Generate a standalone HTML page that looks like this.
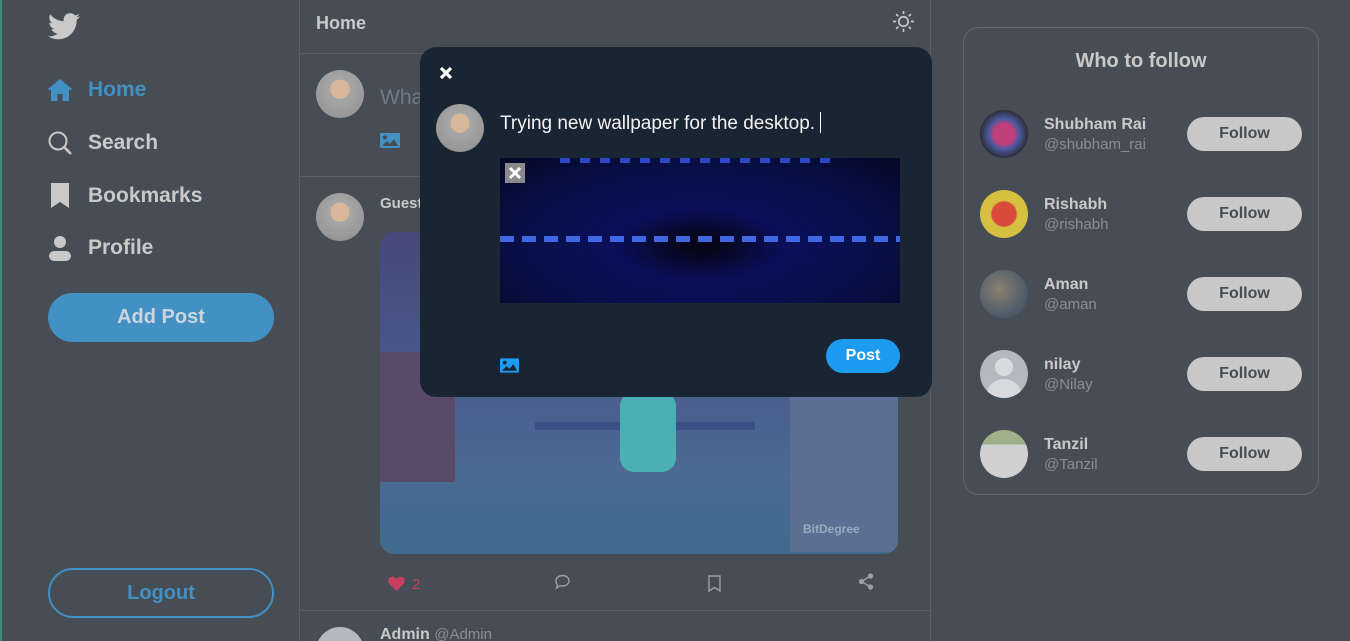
<!DOCTYPE html>
<html><head><meta charset="utf-8"><style>
*{box-sizing:border-box;margin:0;padding:0}
html{width:1350px;height:641px;overflow:hidden}
body{width:1350px;height:641px;overflow:hidden;background:#474d55;font-family:"Liberation Sans",sans-serif;color:#c9c9c9;position:relative}
.abs{position:absolute}
.nav{left:48px;font-size:21px;font-weight:bold;display:flex;align-items:center}
.nav svg{margin-right:16px}
.btn{border-radius:25px;font-weight:bold;font-size:20px;text-align:center}
.av{border-radius:50%;background:radial-gradient(circle at 50% 40%,#d9b79a 0 25%,#a7a7a7 26%,#8d8d8d 100%)}
.fb{position:absolute;left:1187px;width:115px;height:34px;border-radius:17px;background:#c8c8c8;color:#474d55;font-weight:bold;font-size:16px;text-align:center;line-height:33px}
.fn{position:absolute;left:1044px;font-weight:bold;font-size:16px;color:#c9c9c9}
.fh{position:absolute;left:1044px;font-size:15px;color:#8a8e94}
.fa{position:absolute;left:980px;width:48px;height:48px;border-radius:50%}
</style></head><body>
<div class="abs" style="left:0;top:0;width:2px;height:641px;background:#3e8a78"></div>
<svg class="abs" style="left:48px;top:13px" width="32" height="27" viewBox="0 0 24 20"><path fill="#c9c9c9" d="M24 2.4c-.9.4-1.8.7-2.8.8 1-.6 1.8-1.6 2.2-2.7-1 .6-2 1-3.1 1.2C19.3.7 18 0 16.6 0c-2.7 0-4.9 2.2-4.9 4.9 0 .4 0 .8.1 1.1C7.7 5.8 4.1 3.9 1.700.9c-.4.7-.7 1.6-.7 2.5 0 1.7.9 3.2 2.2 4.1-.8 0-1.600-.2-2.200-.6v.1c0 2.4 1.7 4.4 3.9 4.8-.4.1-.8.2-1.3.2-.3 0-.6 0-.9-.1.6 2 2.4 3.4 4.6 3.4-1.7 1.3-3.8 2.1-6.1 2.1H0c2.2 1.4 4.8 2.2 7.5 2.2 9.1 0 14-7.5 14-14v-.6c1-.7 1.8-1.6 2.5-2.5z"/></svg>
<div class="abs nav" style="top:78px;color:#4390c3"><svg width="24" height="22" viewBox="0 0 24 22"><path fill="#4390c3" d="M12 0 0 10l1.5 1.6L3 10.4V22h6.5v-7h5v7H21V10.4l1.5 1.2L24 10z"/></svg>Home</div>
<div class="abs nav" style="top:131px"><svg width="24" height="24" viewBox="0 0 24 24"><circle cx="10" cy="10" r="8.5" fill="none" stroke="#c9c9c9" stroke-width="2"/><path d="M16 16l7 7" stroke="#c9c9c9" stroke-width="2.5"/></svg>Search</div>
<div class="abs nav" style="top:183px"><svg width="24" height="26" viewBox="0 0 24 26"><path fill="#c9c9c9" d="M3 0h18v25l-9-6-9 6z"/></svg>Bookmarks</div>
<div class="abs nav" style="top:235px"><svg width="24" height="26" viewBox="0 0 24 26"><circle cx="12" cy="7" r="6" fill="#c9c9c9"/><rect x="1" y="16" width="22" height="10" rx="5" fill="#c9c9c9"/></svg>Profile</div>
<div class="abs btn" style="left:48px;top:293px;width:226px;height:49px;line-height:49px;background:#4390c3;color:#c9d6df">Add Post</div>
<div class="abs btn" style="left:48px;top:568px;width:226px;height:50px;line-height:46px;border:2px solid #4390c3;color:#4390c3">Logout</div>

<div class="abs" style="left:299px;top:0;width:1px;height:641px;background:#5a6068"></div>
<div class="abs" style="left:930px;top:0;width:1px;height:641px;background:#5a6068"></div>
<div class="abs" style="left:316px;top:13px;font-weight:bold;font-size:18px">Home</div>
<svg class="abs" style="left:893px;top:11px" width="21" height="21" viewBox="0 0 20 20"><circle cx="10" cy="10" r="4.5" fill="none" stroke="#c9c9c9" stroke-width="1.6"/><g stroke="#c9c9c9" stroke-width="1.6"><path d="M10 0v3M10 17v3M0 10h3M17 10h3M3 3l2 2M15 15l2 2M3 17l2-2M15 5l2-2"/></g></svg>
<div class="abs" style="left:300px;top:53px;width:630px;height:1px;background:#5a6068"></div>
<div class="abs av" style="left:316px;top:70px;width:48px;height:48px"></div>
<div class="abs" style="left:380px;top:86px;font-size:21px;color:#6f7a88">What</div>
<svg class="abs" style="left:380px;top:133px" width="20" height="15" viewBox="0 0 20 15"><rect width="20" height="15" rx="1.5" fill="#4390c3"/><circle cx="5" cy="4.5" r="2" fill="#474d55"/><path d="M2 13l5-5 3 3 4-5 4 7z" fill="#474d55"/></svg>
<div class="abs" style="left:300px;top:176px;width:630px;height:1px;background:#5a6068"></div>
<div class="abs av" style="left:316px;top:193px;width:48px;height:48px"></div>
<div class="abs" style="left:380px;top:195px;font-weight:bold;font-size:15px">Guest</div>
<div class="abs" style="left:380px;top:232px;width:518px;height:322px;border-radius:14px;overflow:hidden;background:linear-gradient(180deg,#45487a 0%,#4a5a8e 45%,#4a6a93 75%,#3f6b8c 100%)">
 <div class="abs" style="left:0;top:120px;width:75px;height:130px;background:#5a4a6a"></div>
 <div class="abs" style="left:410px;top:150px;width:108px;height:170px;background:#5a6f92"></div>
 <div class="abs" style="left:155px;top:190px;width:220px;height:8px;background:#3b4f86"></div>
 <div class="abs" style="left:240px;top:160px;width:56px;height:80px;border-radius:14px;background:#4bb0b6"></div>
 <div class="abs" style="left:423px;top:290px;font-size:12px;color:#9aaac0;font-weight:bold">BitDegree</div>
</div>
<svg class="abs" style="left:388px;top:576px" width="17" height="15" viewBox="0 0 24 21"><path fill="#c8405f" d="M12 21 2 11C-1 8 0 2 5 1c3-.5 5 1 7 3 2-2 4-3.5 7-3 5 1 6 7 3 10z"/></svg>
<div class="abs" style="left:412px;top:576px;font-size:15px;color:#c8405f">2</div>
<svg class="abs" style="left:554px;top:574px" width="17" height="16" viewBox="0 0 17 16"><path d="M8.5 1.5c3.6 0 6.5 2.4 6.5 5.3s-2.9 5.2-6.5 5.2c-.8 0-1.6-.1-2.3-.3L2.5 14l1-3C2.5 10 2 8.5 2 6.8 2 3.9 4.9 1.5 8.5 1.5z" fill="none" stroke="#9aa0a6" stroke-width="1.4"/></svg>
<svg class="abs" style="left:708px;top:575px" width="13" height="17" viewBox="0 0 13 17"><path d="M1 1h11v15l-5.5-3.5L1 16z" fill="none" stroke="#9aa0a6" stroke-width="1.4"/></svg>
<svg class="abs" style="left:858px;top:573px" width="16" height="17" viewBox="0 0 16 17"><circle cx="12.5" cy="3" r="2.6" fill="#9aa0a6"/><circle cx="3.5" cy="8.5" r="2.6" fill="#9aa0a6"/><circle cx="12.5" cy="14" r="2.6" fill="#9aa0a6"/><path d="M12.5 3 3.5 8.5l9 5.5" stroke="#9aa0a6" stroke-width="1.6" fill="none"/></svg>
<div class="abs" style="left:300px;top:610px;width:630px;height:1px;background:#5a6068"></div>
<div class="abs" style="left:316px;top:627px;width:48px;height:14px;overflow:hidden"><div style="width:48px;height:48px;border-radius:50%;background:#b5b8bf"></div></div>
<div class="abs" style="left:380px;top:626px;font-weight:bold;font-size:16px">Admin <span style="font-weight:normal;color:#8a8e94;font-size:15px">@Admin</span></div>

<div class="abs" style="left:963px;top:27px;width:356px;height:468px;border:1px solid #5f656d;border-radius:16px"></div>
<div class="abs" style="left:963px;top:50px;width:356px;text-align:center;font-weight:bold;font-size:20px">Who to follow</div>
<div class="fa" style="top:110px;background:radial-gradient(circle,#c0407a 0 30%,#4a5aa0 45%,#2e2e3a 70%)"></div>
<div class="fn" style="top:116px">Shubham Rai</div><div class="fh" style="top:136px">@shubham_rai</div><div class="fb" style="top:117px">Follow</div>
<div class="fa" style="top:190px;background:radial-gradient(circle,#d84a3a 0 35%,#d6c040 40%)"></div>
<div class="fn" style="top:196px">Rishabh</div><div class="fh" style="top:216px">@rishabh</div><div class="fb" style="top:197px">Follow</div>
<div class="fa" style="top:270px;background:radial-gradient(circle at 40% 40%,#8a8070,#4a5a6a 70%)"></div>
<div class="fn" style="top:276px">Aman</div><div class="fh" style="top:296px">@aman</div><div class="fb" style="top:277px">Follow</div>
<div class="fa" style="top:350px;background:#b5b8bf;overflow:hidden"><div class="abs" style="left:15px;top:8px;width:18px;height:18px;border-radius:50%;background:#d9dadd"></div><div class="abs" style="left:7px;top:29px;width:34px;height:30px;border-radius:50%;background:#d9dadd"></div></div>
<div class="fn" style="top:356px">nilay</div><div class="fh" style="top:376px">@Nilay</div><div class="fb" style="top:357px">Follow</div>
<div class="fa" style="top:430px;background:linear-gradient(180deg,#a0b08a 0 30%,#d0d0d0 30%)"></div>
<div class="fn" style="top:436px">Tanzil</div><div class="fh" style="top:456px">@Tanzil</div><div class="fb" style="top:437px">Follow</div>

<div class="abs" style="left:420px;top:47px;width:512px;height:350px;background:#1a2533;border-radius:16px">
 <svg class="abs" style="left:19px;top:19px" width="14" height="14" viewBox="0 0 14 14"><path d="M2 2l10 10M12 2 2 12" stroke="#fff" stroke-width="3.2"/></svg>
 <div class="abs av" style="left:16px;top:57px;width:48px;height:48px"></div>
 <div class="abs" style="left:80px;top:65px;font-size:19px;color:#f2f2f2">Trying new wallpaper for the desktop. <span style="display:inline-block;width:1px;height:21px;background:#fff;vertical-align:-4px"></span></div>
 <div class="abs" style="left:80px;top:111px;width:400px;height:145px;overflow:hidden;background:radial-gradient(ellipse at 50% 60%,#05061a 0 6%,#0a0f5a 30%,#08104a 60%,#050826 100%)">
  <div class="abs" style="left:0;top:78px;width:400px;height:6px;background:repeating-linear-gradient(90deg,#4a78ff 0 14px,transparent 14px 22px);opacity:.85"></div>
  <div class="abs" style="left:60px;top:0;width:280px;height:5px;background:repeating-linear-gradient(90deg,#4060ff 0 10px,transparent 10px 20px);opacity:.7"></div>
  <div class="abs" style="left:5px;top:5px;width:20px;height:20px;background:#8a8a8a"><svg width="20" height="20" viewBox="0 0 20 20"><path d="M5 5l10 10M15 5 5 15" stroke="#fff" stroke-width="3"/></svg></div>
 </div>
 <svg class="abs" style="left:80px;top:311px" width="19" height="15" viewBox="0 0 20 15"><rect width="20" height="15" rx="1.5" fill="#1d9bf0"/><circle cx="5" cy="4.5" r="2" fill="#1a2533"/><path d="M2 13l5-5 3 3 4-5 4 7z" fill="#1a2533"/></svg>
 <div class="abs" style="left:406px;top:292px;width:74px;height:34px;border-radius:17px;background:#1d9bf0;color:#fff;font-weight:bold;font-size:16px;text-align:center;line-height:33px">Post</div>
</div>
</body></html>
